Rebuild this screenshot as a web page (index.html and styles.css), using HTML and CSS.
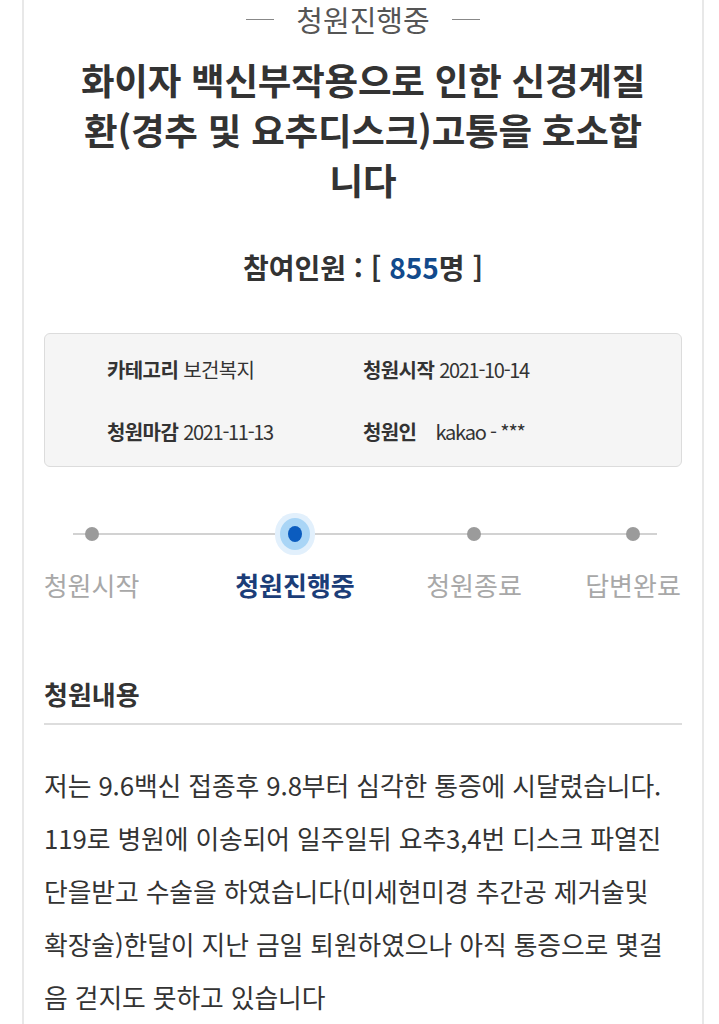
FILE: index.html
```html
<!DOCTYPE html>
<html lang="ko">
<head>
<meta charset="utf-8">
<title>청원진행중</title>
<link rel="stylesheet" href="styles.css">
</head>
<body>
<div class="page">
  <div class="status"><span class="dash"></span><span class="status-text">청원진행중</span><span class="dash"></span></div>
  <h1 class="title">화이자 백신부작용으로 인한 신경계질<br>환(경추 및 요추디스크)고통을 호소합<br>니다</h1>
  <p class="count">참여인원 : [ <span class="num">855</span>명 ]</p>

  <div class="info">
    <div class="info-row">
      <div class="info-cell"><b>카테고리</b> 보건복지</div>
      <div class="info-cell"><b>청원시작</b> <span class="date">2021-10-14</span></div>
    </div>
    <div class="info-row">
      <div class="info-cell"><b>청원마감</b> <span class="date">2021-11-13</span></div>
      <div class="info-cell"><b>청원인</b> <span class="author">kakao - ***</span></div>
    </div>
  </div>

  <div class="timeline">
    <div class="step s1"><span class="dot"></span><span class="label">청원시작</span></div>
    <div class="step s2 active"><span class="dot"></span><span class="label">청원진행중</span></div>
    <div class="step s3"><span class="dot"></span><span class="label">청원종료</span></div>
    <div class="step s4"><span class="dot"></span><span class="label">답변완료</span></div>
  </div>

  <h2 class="section-title">청원내용</h2>
  <div class="content">
    저는 9.6백신 접종후 9.8부터 심각한 통증에 시달렸습니다.<br>
    119로 병원에 이송되어 일주일뒤 요추3,4번 디스크 파열진<br>
    단을받고 수술을 하였습니다(미세현미경 추간공 제거술및<br>
    확장술)한달이 지난 금일 퇴원하였으나 아직 통증으로 몇걸<br>
    음 걷지도 못하고 있습니다
  </div>
</div>
</body>
</html>
```

FILE: styles.css
```css
html, body {
  margin: 0;
  padding: 0;
  background: #ffffff;
}
body {
  font-family: "Noto Sans CJK KR", "Noto Sans", sans-serif;
  color: #333333;
}
.page {
  margin: 0 15px 0 22px;
  border-left: 2px solid #e8e8e8;
  border-right: 2px solid #e8e8e8;
  padding: 0 20px;
  min-height: 1024px;
  box-sizing: border-box;
}
.status {
  display: flex;
  justify-content: center;
  align-items: center;
  gap: 22px;
  height: 38px;
  padding-top: 0;
  font-size: 29px;
  line-height: 38px;
  color: #555555;
}
.dash {
  width: 28px;
  height: 1px;
  background: #888888;
}
.title {
  margin: 17px 0 0;
  text-align: center;
  font-size: 36.5px;
  line-height: 50px;
  font-weight: 700;
  color: #333333;
  letter-spacing: -0.2px;
}
.count {
  margin: 44px 0 0;
  text-align: center;
  font-size: 28px;
  line-height: 36px;
  font-weight: 700;
  letter-spacing: 0;
  color: #333333;
}
.num {
  color: #124a8c;
}
.info {
  margin-top: 48px;
  background: #f5f5f5;
  border: 1px solid #dcdcdc;
  border-radius: 6px;
  padding: 23px 0 21px 62px;
  display: flex;
  flex-direction: column;
  gap: 36px;
}
.info-row {
  display: flex;
  font-size: 20px;
  line-height: 26px;
  letter-spacing: -0.6px;
  color: #333333;
}
.info-cell {
  width: 256px;
  white-space: nowrap;
}
.info-cell b {
  font-weight: 700;
}
.date {
  letter-spacing: -1.3px;
}
.author {
  margin-left: 14px;
  letter-spacing: -1.2px;
}
.timeline {
  margin-top: 43px;
  display: flex;
  position: relative;
}
.timeline::before {
  content: "";
  position: absolute;
  left: 29px;
  right: 25px;
  top: 23px;
  height: 2px;
  background: #d2d2d2;
}
.step {
  display: flex;
  flex-direction: column;
  align-items: center;
  position: relative;
}
.s1 { width: 95px; }
.s2 { width: 120px; margin-left: 96px; }
.s3 { width: 120px; margin-left: 59px; }
.s4 { width: 94px; margin-left: 52px; }
.dot {
  width: 48px;
  height: 48px;
  display: flex;
  align-items: center;
  justify-content: center;
}
.dot::after {
  content: "";
  width: 14px;
  height: 14px;
  border-radius: 50%;
  background: #9b9b9b;
}
.active .dot::after {
  width: 14px;
  height: 16px;
  background: #0b5cbf;
  box-shadow: 0 0 0 8px #a9d5f6, 0 0 0 13px #e2f0fc;
}
.label {
  margin-top: 10px;
  font-size: 26px;
  line-height: 34px;
  color: #a8a8a8;
  white-space: nowrap;
}
.active .label {
  color: #1b3d78;
  font-weight: 700;
}
.section-title {
  margin: 75px 0 0;
  font-size: 26px;
  line-height: 34px;
  font-weight: 700;
  color: #333333;
  padding-bottom: 12px;
  border-bottom: 2px solid #dddddd;
}
.content {
  margin-top: 33px;
  font-size: 25.8px;
  line-height: 53px;
  color: #333333;
  letter-spacing: -0.1px;
}
```
